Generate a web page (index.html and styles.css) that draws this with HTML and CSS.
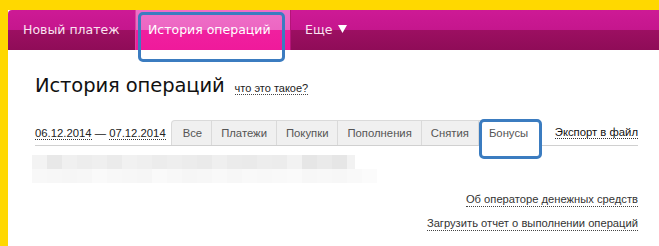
FILE: index.html
```html
<!DOCTYPE html>
<html lang="ru">
<head>
<meta charset="utf-8">
<link rel="stylesheet" href="styles.css">
</head>
<body>
<div class="page">
  <nav class="nav">
    <a class="nav-item first">Новый платеж</a>
    <a class="nav-item active">История операций<span class="mark mark-nav"></span></a>
    <a class="nav-item more">Еще <svg class="arrow" width="9" height="8" viewBox="0 0 9 8"><path d="M0 0H9L4.5 8Z" fill="#fff"/></svg></a>
  </nav>
  <main class="content">
    <div class="title-row">
      <h1 class="title">История операций</h1>
      <a class="hint">что это такое?</a>
    </div>
    <div class="filter-row">
      <div class="dates"><a class="dotted">06.12.2014</a> — <a class="dotted">07.12.2014</a></div>
      <ul class="tabs">
        <li class="tab first-tab">Все</li>
        <li class="tab">Платежи</li>
        <li class="tab">Покупки</li>
        <li class="tab">Пополнения</li>
        <li class="tab">Снятия</li>
        <li class="tab current">Бонусы<span class="mark mark-tab"></span></li>
      </ul>
      <div class="export"><a class="dotted">Экспорт в файл</a></div>
    </div>
    <div class="blur">
      <div class="blur-row r1">
        <i style="background:#f3f3f3"></i><i style="background:#e8e8e8"></i><i style="background:#f0f0f0"></i><i style="background:#ededed"></i><i style="background:#efefef"></i><i style="background:#ebebeb"></i><i style="background:#f1f1f1"></i><i style="background:#efefef"></i><i style="background:#ececec"></i><i style="background:#eeeeee"></i><i style="background:#ececec"></i><i style="background:#eaeaea"></i><i style="background:#efefef"></i><i style="background:#ebebeb"></i><i style="background:#eaeaea"></i><i style="background:#ededed"></i><i style="background:#ececec"></i><i style="background:#f2f2f2"></i><i style="background:#e6e6e6"></i><i style="background:#eaeaea"></i><i style="background:#e6e6e6"></i><i style="background:#f2f2f2"></i>
      </div>
      <div class="blur-row r2">
        <i style="background:#f8f8f8"></i><i style="background:#f7f7f7"></i><i style="background:#f6f6f6"></i><i style="background:#f7f7f7"></i><i style="background:#fafafa"></i><i style="background:#f8f8f8"></i><i style="background:#f7f7f7"></i><i style="background:#f6f6f6"></i><i style="background:#fafafa"></i><i style="background:#f8f8f8"></i><i style="background:#f6f6f6"></i><i style="background:#f7f7f7"></i><i style="background:#f9f9f9"></i><i style="background:#f7f7f7"></i><i style="background:#f9f9f9"></i><i style="background:#f8f8f8"></i><i style="background:#f9f9f9"></i><i style="background:#fafafa"></i><i style="background:#f7f7f7"></i><i style="background:#f8f8f8"></i><i style="background:#f7f7f7"></i><i style="background:#f9f9f9"></i><i style="background:#fbfbfb"></i>
      </div>
    </div>
    <div class="links">
      <a class="dotted link">Об операторе денежных средств</a>
      <a class="dotted link">Загрузить отчет о выполнении операций</a>
    </div>
  </main>
</div>
</body>
</html>
```

FILE: styles.css
```css
html, body {
  margin: 0;
  padding: 0;
}
body {
  background: #ffd800;
  font-family: "Liberation Sans", Arial, sans-serif;
  width: 659px;
  height: 246px;
  overflow: hidden;
}
.page {
  margin: 10px 0 0 8px;
  background: #fff;
  height: 236px;
}
.nav {
  display: flex;
  height: 40px;
  background: linear-gradient(to bottom, #cd1a95 0, #c5168d 50%, #9c0f62 50%, #8f0c58 100%);
  border-top-left-radius: 4px;
  font-family: "DejaVu Sans", Verdana, sans-serif;
}
.nav-item {
  position: relative;
  display: flex;
  align-items: center;
  color: #fbe3f1;
  font-size: 12.5px;
  padding: 0 16px 2px 15px;
  white-space: nowrap;
}
.nav-item.first {
  width: 96px;
  border-right: 1px solid #d9479f;
  border-top-left-radius: 4px;
}
.nav-item.active {
  width: 126px;
  padding: 0 16px 2px 12px;
  background: linear-gradient(to bottom, #ef6fc8 0, #ec66c2 50%, #f0209f 50%, #ef1a9b 100%);
  color: #fff;
  border-right: 1px solid #b41478;
}
.nav-item.more {
  padding-left: 14px;
}
.arrow {
  margin-left: 6px;
  margin-top: -1px;
}
.mark {
  position: absolute;
  border: 3px solid #3b7cc0;
  border-radius: 5px;
  pointer-events: none;
}
.mark-nav {
  left: 2px;
  top: 2px;
  width: 141px;
  height: 44px;
}
.content {
  padding: 0 21px 0 27px;
}
.title-row {
  display: flex;
  align-items: baseline;
  padding-top: 24px;
  height: 34px;
}
.title {
  margin: 0;
  font-family: "DejaVu Sans", Tahoma, sans-serif;
  font-weight: normal;
  font-size: 19.5px;
  color: #111;
  letter-spacing: -0.1px;
}
.hint {
  margin-left: 10px;
  font-size: 11px;
  color: #222;
  border-bottom: 1px dotted #444;
  line-height: 12px;
}
.filter-row {
  display: flex;
  align-items: flex-end;
  margin-top: 12px;
  border-bottom: 1px solid #d0d0d0;
  height: 25px;
}
.dates {
  font-size: 11.3px;
  color: #222;
  padding-bottom: 5px;
  margin-right: 5px;
  white-space: nowrap;
}
.dotted {
  border-bottom: 1px dotted #333;
  line-height: 13px;
}
.tabs {
  display: flex;
  list-style: none;
  margin: 0;
  padding: 0;
  height: 25px;
}
.tab {
  position: relative;
  font-size: 11.3px;
  color: #555;
  background: #f0f0f0;
  border: 1px solid #dadada;
  border-bottom: none;
  border-left: none;
  padding: 0 9px;
  display: flex;
  align-items: center;
  height: 25px;
  box-sizing: border-box;
}
.tab.first-tab {
  border-left: 1px solid #dadada;
  border-top-left-radius: 4px;
  padding: 0 9px 0 11px;
}
.tab.current {
  background: #fff;
  height: 26px;
  margin-bottom: -1px;
  padding: 0 12px 1px 10px;
  border-right: none;
}
.mark-tab {
  left: 0;
  right: -2px;
  top: -2px;
  bottom: -13px;
}
.export {
  margin-left: auto;
  font-size: 11.3px;
  color: #111;
  padding-bottom: 6px;
  white-space: nowrap;
}
.blur {
  margin-top: 9px;
  margin-left: -3px;
}
.blur-row {
  display: flex;
  height: 14px;
}
.blur-row i {
  width: 15px;
  height: 14px;
}
.r1 i:last-child {
  width: 8px;
}
.links {
  display: flex;
  flex-direction: column;
  align-items: flex-end;
  margin-top: 10px;
  gap: 10px;
}
.link {
  font-size: 11.2px;
  color: #333;
  border-bottom-color: #444;
}
```
